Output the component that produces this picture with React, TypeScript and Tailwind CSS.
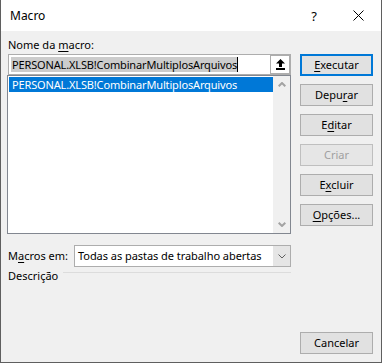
import React from "react";

function Btn({
  children,
  primary = false,
  disabled = false,
  className = "",
}: {
  children: React.ReactNode;
  primary?: boolean;
  disabled?: boolean;
  className?: string;
}) {
  const base =
    "w-[73px] h-[22px] flex items-center justify-center text-[11px] leading-[16px] whitespace-nowrap";
  const look = primary
    ? "border-2 border-[#0078d7] bg-[#e1e1e1] text-black"
    : disabled
    ? "border border-[#bfbfbf] bg-[#e6e6e6] text-[#a0a0a0]"
    : "border border-[#adadad] bg-[#e1e1e1] text-black";
  return <div className={`${base} ${look} ${className}`}>{children}</div>;
}

const U = ({ children }: { children: React.ReactNode }) => (
  <span className="underline underline-offset-[2px] decoration-[1px]">{children}</span>
);

export default function App() {
  return (
    <div className="w-[382px] h-[363px] bg-[#f0f0f0] border-l border-r border-b border-[#5f5f5f] flex flex-col text-[11px] leading-[16px] text-black font-['Noto_Sans',sans-serif] overflow-hidden whitespace-nowrap">
      {/* Title bar */}
      <div className="h-[31px] bg-white flex items-center pl-[9px] shrink-0">
        <span className="text-[12px]">Macro</span>
        <span className="ml-auto mr-[36px] text-[13px]">?</span>
        <svg width="11" height="11" viewBox="0 0 11 11" className="mr-[17px]">
          <path d="M0.5 0.5 L10.5 10.5 M10.5 0.5 L0.5 10.5" stroke="#000" strokeWidth="1" />
        </svg>
      </div>

      {/* Body */}
      <div className="flex flex-row flex-1 pl-[6px]">
        {/* Left column */}
        <div className="w-[284px] flex flex-col">
          <div className="mt-[6px] h-[16px] pl-[1px]">
            Nome da <U>m</U>acro:
          </div>
          <div className="mt-[1px] ml-[1px] h-[21px] border border-[#adadad] bg-white flex items-start">
            <div className="mt-[2px] ml-[2px] flex items-center h-[15px]">
              <span className="bg-[#cccccc] h-[15px] leading-[15px] pl-[1px] pr-0 tracking-[-0.15px]">
                PERSONAL.XLSB!CombinarMultiplosArquivos
              </span>
              <span className="w-[1px] h-[15px] bg-black" />
            </div>
            <div className="ml-auto w-[20px] h-[19px] border border-[#adadad] bg-white flex items-center justify-center">
              <svg width="9" height="11" viewBox="0 0 9 11">
                <path d="M4.5 0 L9 4.5 L6 4.5 L6 8 L3 8 L3 4.5 L0 4.5 Z" fill="#000" />
                <rect x="0" y="9" width="9" height="2" fill="#000" />
              </svg>
            </div>
          </div>
          <div className="h-[159px] border border-[#828790] bg-white flex flex-row">
            <div className="flex-1 pt-[1px] pl-[1px]">
              <div className="h-[15px] leading-[15px] bg-[#0078d7] text-white pl-[3px] tracking-[-0.15px]">
                PERSONAL.XLSB!CombinarMultiplosArquivos
              </div>
            </div>
            <div className="w-[17px] bg-[#f0f0f0] flex flex-col items-center justify-between pt-[6px] pb-[6px]">
              <svg width="8" height="5" viewBox="0 0 8 5">
                <polyline points="0.7,4.3 4,1 7.3,4.3" fill="none" stroke="#a3a3a3" strokeWidth="2" />
              </svg>
              <svg width="8" height="5" viewBox="0 0 8 5">
                <polyline points="0.7,0.7 4,4 7.3,0.7" fill="none" stroke="#a3a3a3" strokeWidth="2" />
              </svg>
            </div>
          </div>

          <div className="mt-[11px] flex flex-row items-center">
            <div className="w-[67px] pl-[1px]">
              M<U>a</U>cros em:
            </div>
            <div className="w-[217px] h-[22px] border border-[#adadad] bg-white flex flex-row items-center">
              <span className="pl-[3px] tracking-[-0.05px]">Todas as pastas de trabalho abertas</span>
              <div className="ml-auto w-[17px] h-full bg-[#e5e5e5] flex items-center justify-center">
                <svg width="8" height="5" viewBox="0 0 8 5">
                  <polyline points="0.5,0.5 4,4 7.5,0.5" fill="none" stroke="#606060" strokeWidth="1" />
                </svg>
              </div>
            </div>
          </div>

          <div className="mt-[1px] flex flex-row items-start pl-[1px]">
            <span>Descrição</span>
            <div className="flex-1 ml-[5px] mt-[4px] h-[1px] bg-[#dcdcdc]" />
          </div>
        </div>

        {/* Right column */}
        <div className="ml-[9px] flex flex-col pt-[23px] pb-[8px]">
          <div className="flex flex-col gap-[8px]">
            <Btn primary>
              <U>E</U>xecutar
            </Btn>
            <Btn>
              Depu<U>r</U>ar
            </Btn>
            <Btn>
              E<U>d</U>itar
            </Btn>
            <Btn disabled>Criar</Btn>
            <Btn>
              E<U>x</U>cluir
            </Btn>
            <Btn>
              <U>O</U>pções...
            </Btn>
          </div>
          <Btn className="mt-auto">Cancelar</Btn>
        </div>
      </div>
    </div>
  );
}
